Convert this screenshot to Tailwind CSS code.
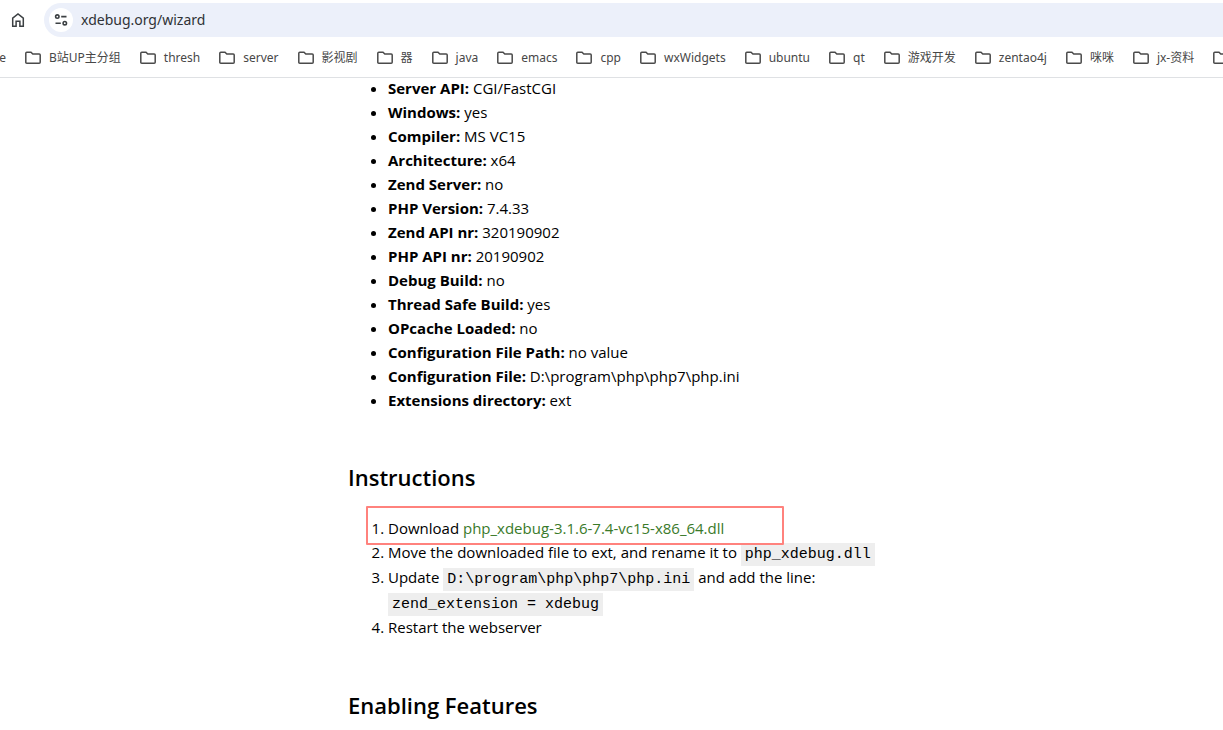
<!DOCTYPE html>
<html lang="en">
<head>
<meta charset="utf-8">
<title>Xdebug: Support — Tailored Installation Instructions</title>
<script src="https://cdn.jsdelivr.net/npm/@tailwindcss/browser@4"></script>
</head>
<body class="bg-white text-black font-['Noto_Sans','Noto_Sans_CJK_SC',sans-serif] overflow-hidden h-screen">
<svg class="hidden" aria-hidden="true">
  <symbol id="folder" viewBox="0 0 16 14"><path d="M.8 2.3Q.8 1.2 1.8 1.2H6L7.8 3H14.2Q15.2 3 15.2 4V11.2Q15.2 12.2 14.2 12.2H1.8Q.8 12.2.8 11.2Z" fill="none" stroke="#4a4a4a" stroke-width="1.5"/></symbol>
</svg>
<header class="border-b border-[#dfe1e4] bg-white">
  <div class="flex items-center pt-[3px]">
    <button type="button" aria-label="Home" class="ml-[10px] mr-[18px] size-4">
      <svg viewBox="0 0 16 16" class="size-4" fill="none" stroke="#3c4043" stroke-width="1.5"><path d="M2.7 6.100 8 2l5.300 4.100V14.200H9.900V9.300H6.100V14.200H2.700Z"/></svg>
    </button>
    <div class="flex h-[34px] flex-1 items-center gap-2 rounded-l-full bg-[#ecf0fa] pl-[5px]">
      <button type="button" aria-label="View site information" class="flex size-6 items-center justify-center rounded-full bg-white">
        <svg viewBox="0 0 14 14" class="size-[14px]" fill="none" stroke="#3c4043" stroke-width="1.600"><circle cx="3.300" cy="3.600" r="1.700"/><path d="M7.200 3.600H12.500M1.500 10.200H6.800"/><circle cx="10.800" cy="10.200" r="1.700"/></svg>
      </button>
      <input type="text" aria-label="Address" value="xdebug.org/wizard" class="min-w-0 flex-1 bg-transparent text-sm text-[#303236] outline-none">
    </div>
  </div>
  <nav aria-label="Bookmarks" class="flex h-10 items-center gap-[19px] overflow-hidden whitespace-nowrap pt-[2px] text-xs text-[#474747]">
    <a href="#" class="flex w-[6px] justify-end">e</a>
    <a href="#" class="flex items-center gap-2"><svg class="h-[14px] w-4"><use href="#folder"/></svg>B站UP主分组</a>
    <a href="#" class="flex items-center gap-2"><svg class="h-[14px] w-4"><use href="#folder"/></svg>thresh</a>
    <a href="#" class="flex items-center gap-2"><svg class="h-[14px] w-4"><use href="#folder"/></svg>server</a>
    <a href="#" class="flex items-center gap-2"><svg class="h-[14px] w-4"><use href="#folder"/></svg>影视剧</a>
    <a href="#" class="flex items-center gap-2"><svg class="h-[14px] w-4"><use href="#folder"/></svg>器</a>
    <a href="#" class="flex items-center gap-2"><svg class="h-[14px] w-4"><use href="#folder"/></svg>java</a>
    <a href="#" class="flex items-center gap-2"><svg class="h-[14px] w-4"><use href="#folder"/></svg>emacs</a>
    <a href="#" class="flex items-center gap-2"><svg class="h-[14px] w-4"><use href="#folder"/></svg>cpp</a>
    <a href="#" class="flex items-center gap-2"><svg class="h-[14px] w-4"><use href="#folder"/></svg>wxWidgets</a>
    <a href="#" class="flex items-center gap-2"><svg class="h-[14px] w-4"><use href="#folder"/></svg>ubuntu</a>
    <a href="#" class="flex items-center gap-2"><svg class="h-[14px] w-4"><use href="#folder"/></svg>qt</a>
    <a href="#" class="flex items-center gap-2"><svg class="h-[14px] w-4"><use href="#folder"/></svg>游戏开发</a>
    <a href="#" class="flex items-center gap-2"><svg class="h-[14px] w-4"><use href="#folder"/></svg>zentao4j</a>
    <a href="#" class="flex items-center gap-2"><svg class="h-[14px] w-4"><use href="#folder"/></svg>咪咪</a>
    <a href="#" class="flex items-center gap-2"><svg class="h-[14px] w-4"><use href="#folder"/></svg>jx-资料</a>
    <a href="#" aria-label="More bookmarks" class="flex shrink-0 items-center"><svg class="h-[14px] w-4"><use href="#folder"/></svg></a>
  </nav>
</header>
<main class="-mt-[2px] ml-[348px] font-['Open_Sans',sans-serif] text-[15px] leading-6">
  <ul class="list-disc pl-10 [&_b]:font-bold">
    <li><b>Server API:</b> CGI/FastCGI</li>
    <li><b>Windows:</b> yes</li>
    <li><b>Compiler:</b> MS VC15</li>
    <li><b>Architecture:</b> x64</li>
    <li><b>Zend Server:</b> no</li>
    <li><b>PHP Version:</b> 7.4.33</li>
    <li><b>Zend API nr:</b> 320190902</li>
    <li><b>PHP API nr:</b> 20190902</li>
    <li><b>Debug Build:</b> no</li>
    <li><b>Thread Safe Build:</b> yes</li>
    <li><b>OPcache Loaded:</b> no</li>
    <li><b>Configuration File Path:</b> no value</li>
    <li><b>Configuration File:</b> D:\program\php\php7\php.ini</li>
    <li><b>Extensions directory:</b> ext</li>
  </ul>
  <h2 class="mt-12 text-[22px] leading-[34px] font-semibold">Instructions</h2>
  <div class="relative mt-[22px]">
    <ol class="list-decimal pl-10 [&_code]:bg-[#eee] [&_code]:px-1 [&_code]:py-[3px] [&_code]:font-['Liberation_Mono',monospace] [&_code]:leading-none">
      <li>Download <a href="#" class="text-[#3a7a2a]">php_xdebug-3.1.6-7.4-vc15-x86_64.dll</a></li>
      <li class="leading-[25px]">Move the downloaded file to ext, and rename it to <code>php_xdebug.dll</code></li>
      <li class="leading-[25px]">Update <code>D:\program\php\php7\php.ini</code> and add the line:<br><code>zend_extension = xdebug</code></li>
      <li class="leading-[25px]">Restart the webserver</li>
    </ol>
    <div class="absolute -top-[10px] left-[18px] h-[39px] w-[418px] rounded-[1px] border-2 border-[#ff827d]"></div>
  </div>
  <h2 class="mt-12 text-[22px] leading-[34px] font-semibold">Enabling Features</h2>
</main>
</body>
</html>
